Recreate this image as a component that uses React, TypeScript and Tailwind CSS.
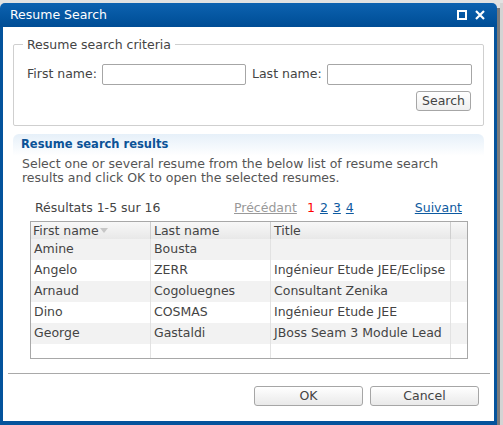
import React from "react";

const rows = [
  ["Amine", "Bousta", ""],
  ["Angelo", "ZERR", "Ingénieur Etude JEE/Eclipse"],
  ["Arnaud", "Cogoluegnes", "Consultant Zenika"],
  ["Dino", "COSMAS", "Ingénieur Etude JEE"],
  ["George", "Gastaldi", "JBoss Seam 3 Module Lead"],
];

export default function App() {
  return (
    <div
      className="w-[503px] h-[425px] bg-[#e2e2e2] overflow-hidden flex flex-col text-[12.5px] text-[#444]"
      style={{ fontFamily: '"DejaVu Sans", Verdana, sans-serif' }}
    >
      <div className="h-[3px] shrink-0" />
      <div className="flex flex-1 min-h-0">
        <div className="w-[497px] flex flex-col shrink-0">
          {/* title bar */}
          <div className="h-[24px] shrink-0 rounded-t-[5px] bg-gradient-to-b from-[#0d62b0] to-[#004d95] flex items-center pl-[10px] pr-[12px] text-white text-[12.5px]">
            <span className="flex-1">Resume Search</span>
            <svg width="10" height="10" viewBox="0 0 10 10" className="mr-[8px]">
              <rect x="1" y="1" width="8" height="8" fill="none" stroke="white" strokeWidth="2" />
            </svg>
            <svg width="10" height="10" viewBox="0 0 10 10">
              <path d="M1 1 L9 9 M9 1 L1 9" stroke="white" strokeWidth="2.2" />
            </svg>
          </div>
          {/* body */}
          <div className="flex-1 bg-white border-x-[3px] border-b-[4px] border-[#04539c] flex flex-col">
            <fieldset className="mx-[10px] mt-[10px] border border-[#cfcfcf] rounded-[2px] px-0 h-[89px]">
              <legend className="ml-[9px] px-[4px] text-[12.5px] text-[#444] leading-[15px]">Resume search criteria</legend>
              <div className="flex items-center mt-[12px] pl-[13px]">
                <span className="w-[75px]">First name:</span>
                <div className="w-[144px] h-[21px] border border-[#a6a6a6] rounded-[2px]" />
                <span className="ml-[6px] w-[75px]">Last name:</span>
                <div className="w-[145px] h-[21px] border border-[#a6a6a6] rounded-[2px]" />
              </div>
              <div className="flex justify-end mt-[6px] pr-[12px]">
                <div className="h-[20px] w-[55px] border border-[#a6a6a6] rounded-[3px] bg-gradient-to-b from-white to-[#efefef] flex items-center justify-center text-[#444]">
                  Search
                </div>
              </div>
            </fieldset>

            <div className="mx-[10px] mt-[8px] rounded-t-[6px] bg-gradient-to-b from-[#e6f0f9] to-white h-[22px] px-[8px] flex items-center">
              <span className="font-bold text-[11.5px] text-[#0c5397]">Resume search results</span>
            </div>
            <div className="ml-[19px] mt-[1px] leading-[14px] text-[#555]">
              Select one or several resume from the below list of resume search
              <br />
              results and click OK to open the selected resumes.
            </div>

            <div className="flex items-center mt-[16px] ml-[32px] mr-[32px] leading-[14px]">
              <span className="text-[#444] w-[199px]">Résultats 1-5 sur 16</span>
              <span className="text-[#999] underline w-[73px]">Précédant</span>
              <span className="text-[#ff0000]">1</span>
              <span className="ml-[5px] text-[#0d5aa0] underline">2</span>
              <span className="ml-[5px] text-[#0d5aa0] underline">3</span>
              <span className="ml-[5px] text-[#0d5aa0] underline">4</span>
              <span className="ml-auto text-[#0d5aa0] underline">Suivant</span>
            </div>

            <div className="ml-[27px] mt-[6px] w-[438px] border border-[#a8a8a8] text-[#444]">
              <div className="grid grid-cols-[120px_120px_180px_16px] h-[17px] bg-gradient-to-b from-[#f8f8f8] to-[#e8e8e8]">
                <div className="border-r border-[#cfcfcf] pl-[2px] flex items-center">
                  First name
                  <svg width="9" height="6" viewBox="0 0 9 6" className="ml-[1px]">
                    <path d="M0 0 L8 0 L4 5 Z" fill="#c6c6c6" />
                  </svg>
                </div>
                <div className="border-r border-[#cfcfcf] pl-[3px] flex items-center">Last name</div>
                <div className="border-r border-[#cfcfcf] pl-[3px] flex items-center">Title</div>
                <div />
              </div>
              {rows.map((r, i) => (
                <div
                  key={i}
                  className={`grid grid-cols-[120px_120px_180px_16px] h-[21px] ${i % 2 === 0 ? "bg-[#f2f2f2]" : "bg-white"}`}
                >
                  <div className="border-r border-[#e2e2e2] pl-[3px] flex items-center">{r[0]}</div>
                  <div className="border-r border-[#e2e2e2] pl-[3px] flex items-center">{r[1]}</div>
                  <div className="border-r border-[#e2e2e2] pl-[3px] flex items-center whitespace-nowrap overflow-hidden">{r[2]}</div>
                  <div />
                </div>
              ))}
              <div className="grid grid-cols-[120px_120px_180px_16px] h-[14px] bg-white">
                <div className="border-r border-[#e2e2e2]" />
                <div className="border-r border-[#e2e2e2]" />
                <div className="border-r border-[#e2e2e2]" />
                <div />
              </div>
            </div>

            <div className="mt-[14px] ml-[5px] mr-[4px] h-px bg-[#a9a9a9]" />
            <div className="flex justify-end gap-[7px] mt-[12px] pr-[15px]">
              <div className="w-[109px] h-[20px] border border-[#a6a6a6] rounded-[3px] bg-gradient-to-b from-white to-[#e9e9e9] flex items-center justify-center text-[12.5px] text-[#444]">
                OK
              </div>
              <div className="w-[109px] h-[20px] border border-[#a6a6a6] rounded-[3px] bg-gradient-to-b from-white to-[#e9e9e9] flex items-center justify-center text-[12.5px] text-[#444]">
                Cancel
              </div>
            </div>
          </div>
        </div>
        <div className="w-[3px] bg-[#7a7a7a] mt-[5px]" />
        <div className="flex-1 bg-[#d4d4d4]" />
      </div>
    </div>
  );
}
